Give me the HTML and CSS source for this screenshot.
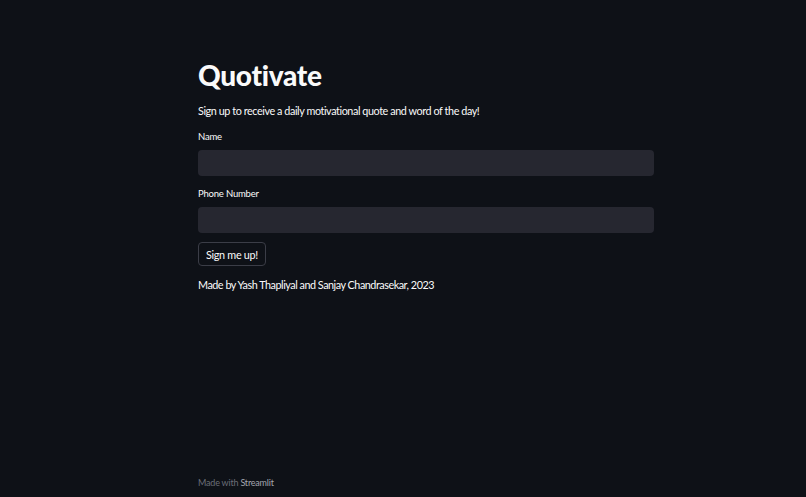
FILE: index.html
```html
<!DOCTYPE html>
<html>
<head>
<meta charset="utf-8">
<link rel="stylesheet" href="styles.css">
</head>
<body>
<div class="app">
  <main class="main">
    <h1 class="title">Quotivate</h1>
    <p class="intro">Sign up to receive a daily motivational quote and word of the day!</p>
    <div class="field">
      <label class="label">Name</label>
      <div class="input"></div>
    </div>
    <div class="field">
      <label class="label">Phone Number</label>
      <div class="input"></div>
    </div>
    <button class="btn">Sign me up!</button>
    <p class="credit">Made by Yash Thapliyal and Sanjay Chandrasekar, 2023</p>
  </main>
  <footer class="footer">Made with <span class="brand">Streamlit</span></footer>
</div>
</body>
</html>
```
FILE: styles.css
```css
html, body {
  margin: 0;
  padding: 0;
  background: #0e1117;
  height: 100%;
}
body {
  font-family: "Lato", "Open Sans", sans-serif;
  color: #fafafa;
}
.app {
  height: 497px;
  display: flex;
  flex-direction: column;
  width: 456px;
  padding-left: 198px;
}
.main {
  flex: 1;
  padding-top: 57px;
}
.title {
  margin: 0;
  font-size: 28px;
  font-weight: 900;
  line-height: 36px;
  letter-spacing: -0.3px;
}
.intro {
  margin: 10px 0 0;
  font-size: 10.8px;
  line-height: 16px;
  letter-spacing: -0.42px;
}
.field {
  margin-top: 11px;
}
.field + .field {
  margin-top: 11px;
}
.label {
  display: block;
  font-size: 9.5px;
  line-height: 14px;
  margin-bottom: 6px;
  letter-spacing: -0.2px;
}
.input {
  height: 26px;
  background: #262730;
  border-radius: 4px;
}
.btn {
  margin-top: 9px;
  display: block;
  height: 24px;
  padding: 0 7px;
  background: #0e1117;
  color: #fafafa;
  border: 1px solid #3b3d47;
  border-radius: 4px;
  font-family: inherit;
  font-size: 10.8px;
  letter-spacing: -0.3px;
}
.credit {
  margin: 11px 0 0;
  font-size: 10.8px;
  line-height: 16px;
  letter-spacing: -0.47px;
}
.footer {
  font-size: 9px;
  color: #6b6e78;
  padding-bottom: 8px;
  line-height: 12px;
  letter-spacing: -0.2px;
}
.brand {
  color: #a3a6ae;
}
```
